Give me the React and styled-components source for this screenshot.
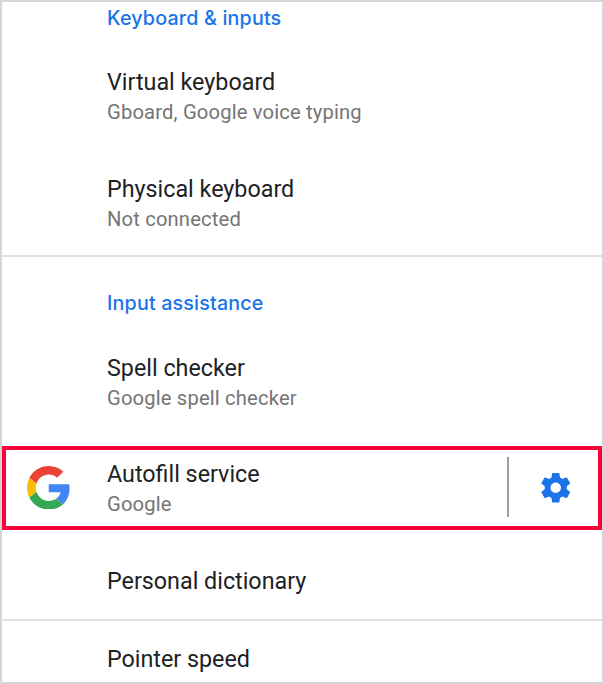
import React from "react";
import styled, { createGlobalStyle } from "styled-components";

const GlobalStyle = createGlobalStyle`
  * { box-sizing: border-box; }
  body { margin: 0; background: #fff; }
`;

const Screen = styled.main`
  width: 604px;
  height: 684px;
  overflow: hidden;
  border: 2px solid #d6d5db;
  background: #fff;
  font-family: Roboto, sans-serif;
  color: #202124;
`;

const Section = styled.section`
  height: ${(p) => p.$height}px;
  border-bottom: ${(p) => (p.$last ? "0" : "2px solid #e2e2e2")};
`;

const Heading = styled.h2`
  margin: 0;
  padding: ${(p) => p.$top}px 0 0 105px;
  height: ${(p) => p.$height}px;
  font-family: Inter, sans-serif;
  font-size: 19.7px;
  line-height: 28px;
  font-weight: 550;
  letter-spacing: 0.17px;
  color: #1a73e8;
  white-space: nowrap;
`;

const Label = styled.span`
  display: block;
  width: max-content;
  font-size: 23.3px;
  line-height: 30px;
`;

const Summary = styled.span`
  display: block;
  width: max-content;
  font-size: 20.2px;
  line-height: 30px;
  letter-spacing: 0.16px;
  color: #757575;
`;

const Row = styled.div`
  height: ${(p) => p.$height}px;
  padding: ${(p) => p.$top || 0}px 0 0 105px;
`;

const Highlight = styled.div`
  display: grid;
  grid-template-columns: 101px 400px 1fr;
  align-items: center;
  height: 84px;
  padding-bottom: 2px;
  border: 4px solid #fb0039;
`;

const Logo = styled.svg`
  width: 43.5px;
  height: 43.5px;
  margin: 1px 0 0 21px;
`;

const Service = styled.div`
  padding-top: 4px;
`;

const Settings = styled.div`
  display: flex;
  align-items: center;
  height: 60px;
  border-left: 2px solid #9e9e9e;
  padding-left: 29px;
`;

const Gear = styled.svg`
  width: 35.5px;
  height: 35.5px;
  margin-top: 1px;
  fill: #1a73e8;
`;

function Item({ label, summary, height, top }) {
  return (
    <Row $height={height} $top={top}>
      <Label>{label}</Label>
      {summary && <Summary>{summary}</Summary>}
    </Row>
  );
}

export default function App() {
  return (
    <>
      <GlobalStyle />
      <Screen>
        <Section $height={255}>
          <Heading $top={2} $height={65}>Keyboard &amp; inputs</Heading>
          <Item label="Virtual keyboard" summary="Gboard, Google voice typing" height={107} />
          <Item label="Physical keyboard" summary="Not connected" height={80} />
        </Section>
        <Section $height={364}>
          <Heading $top={32} $height={96}>Input assistance</Heading>
          <Item label="Spell checker" summary="Google spell checker" height={93} />
          <Highlight>
            <Logo viewBox="0 0 48 48" aria-label="Google">
              <path fill="#EA4335" d="M24 9.5c3.54 0 6.71 1.22 9.21 3.6l6.85-6.85C35.9 2.38 30.47 0 24 0 14.62 0 6.51 5.38 2.56 13.22l7.98 6.19C12.43 13.72 17.74 9.5 24 9.5z" />
              <path fill="#4285F4" d="M46.98 24.55c0-1.57-.15-3.09-.38-4.55H24v9.02h12.94c-.58 2.96-2.26 5.48-4.78 7.18l7.73 6c4.51-4.18 7.09-10.36 7.09-17.65z" />
              <path fill="#FBBC05" d="M10.53 28.59A14.5 14.5 0 0 1 9.77 24c0-1.6.27-3.14.76-4.59l-7.98-6.19A23.99 23.99 0 0 0 0 24c0 3.88.92 7.54 2.56 10.78l7.97-6.19z" />
              <path fill="#34A853" d="M24 48c6.48 0 11.93-2.13 15.89-5.81l-7.73-6c-2.15 1.45-4.92 2.3-8.16 2.3-6.26 0-11.57-4.22-13.47-9.91l-7.98 6.19C6.51 42.62 14.62 48 24 48z" />
            </Logo>
            <Service>
              <Label>Autofill service</Label>
              <Summary>Google</Summary>
            </Service>
            <Settings>
              <Gear viewBox="0 0 24 24" aria-label="Settings">
                <path d="M19.43 12.98c.04-.32.07-.64.07-.98s-.03-.66-.07-.98l2.11-1.65c.19-.15.24-.42.12-.64l-2-3.46c-.12-.22-.39-.3-.61-.22l-2.49 1c-.52-.4-1.08-.73-1.69-.98l-.38-2.65C14.46 2.18 14.25 2 14 2h-4c-.25 0-.46.18-.49.42l-.38 2.65c-.61.25-1.17.59-1.69.98l-2.49-1c-.23-.09-.49 0-.61.22l-2 3.46c-.13.22-.07.49.12.64l2.11 1.65c-.04.32-.07.65-.07.98s.03.66.07.98l-2.11 1.65c-.19.15-.24.42-.12.64l2 3.46c.12.22.39.3.61.22l2.49-1c.52.4 1.08.73 1.69.98l.38 2.65c.03.24.24.42.49.42h4c.25 0 .46-.18.49-.42l.38-2.65c.61-.25 1.17-.59 1.69-.98l2.49 1c.23.09.49 0 .61-.22l2-3.46c.12-.22.07-.49-.12-.64l-2.11-1.65zM12 15.5c-1.93 0-3.5-1.57-3.5-3.5s1.57-3.5 3.5-3.5 3.5 1.57 3.5 3.5-1.57 3.5-3.5 3.5z" />
              </Gear>
            </Settings>
          </Highlight>
          <Item label="Personal dictionary" height={79} top={36} />
        </Section>
        <Section $height={61} $last>
          <Item label="Pointer speed" height={61} top={23} />
        </Section>
      </Screen>
    </>
  );
}
